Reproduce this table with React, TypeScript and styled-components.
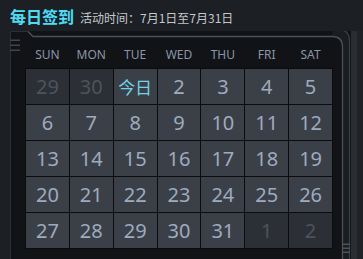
import React from "react";
import styled, { createGlobalStyle } from "styled-components";

const Global = createGlobalStyle`
  html, body { margin: 0; padding: 0; background: #1c1f23; }
  body { font-family: "Noto Sans", "Noto Sans CJK SC", sans-serif; }
`;

const Stage = styled.div`
  position: relative;
  width: 363px;
  height: 259px;
  overflow: hidden;
  background: #1c1f23;
  display: flex;
  flex-direction: column;
`;

const Header = styled.div`
  height: 31px;
  box-sizing: border-box;
  padding: 6px 0 0 10px;
  display: flex;
  align-items: baseline;
  gap: 6px;
`;

const Title = styled.span`
  font-family: "Noto Sans CJK SC", sans-serif;
  font-size: 16px;
  font-weight: 700;
  line-height: 20px;
  color: #55d9f0;
  text-shadow: 0 0 1px #0b3d48, 0 0 1px #0b3d48;
`;

const Sub = styled.span`
  font-family: "Noto Sans CJK SC", sans-serif;
  font-size: 12px;
  line-height: 16px;
  color: #c4c8cc;
`;

const Panel = styled.div`
  position: relative;
  margin-left: 10px;
  width: 341px;
  flex: 1;
  box-sizing: border-box;
  padding: 17px 0 0 15px;
  background: #111316;
`;

const Frame = styled.svg`
  position: absolute;
  left: 0;
  top: 0;
  pointer-events: none;
  z-index: 1;
`;

const Content = styled.div`
  position: relative;
  z-index: 2;
`;

const WeekRow = styled.div`
  width: 308px;
  box-sizing: border-box;
  padding: 0 1px;
  display: grid;
  grid-template-columns: repeat(7, 1fr);
  column-gap: 1px;
  height: 14px;
`;

const WeekDay = styled.div`
  text-align: center;
  font-size: 12px;
  line-height: 14px;
  color: #8a96a8;
`;

const Grid = styled.div`
  margin-top: 6px;
  width: 308px;
  box-sizing: border-box;
  padding: 1px;
  display: grid;
  grid-template-columns: repeat(7, 1fr);
  grid-auto-rows: 35px;
  gap: 1px;
  background: #0b0c0e;
`;

const Cell = styled.div<{ $muted?: boolean }>`
  display: flex;
  align-items: center;
  justify-content: center;
  background: ${(p) => (p.$muted ? "#2c3036" : "#3b4048")};
  color: ${(p) => (p.$muted ? "#4d535c" : "#9eaabe")};
  font-size: 20px;
  line-height: 1;
`;

const Today = styled.span`
  font-family: "Noto Sans CJK SC", sans-serif;
  font-size: 17px;
  color: #72d2e6;
`;

const weekdays = ["SUN", "MON", "TUE", "WED", "THU", "FRI", "SAT"];

type Day = { n: number; muted?: boolean; today?: boolean };

const days: Day[] = [
  { n: 29, muted: true },
  { n: 30, muted: true },
  { n: 1, today: true },
  ...Array.from({ length: 30 }, (_, i) => ({ n: i + 2 })),
  { n: 1, muted: true },
  { n: 2, muted: true },
];

export default function App() {
  return (
    <>
      <Global />
      <Stage>
        <Header>
          <Title>每日签到</Title>
          <Sub>活动时间：7月1日至7月31日</Sub>
        </Header>
        <Panel>
          <Frame width="353" height="228" viewBox="10 31 353 228">
            <rect x="351" y="29" width="6" height="230" fill="#2a2e33" />
            <rect x="357" y="29" width="6" height="230" fill="#1f2226" />
            <path d="M333 29 H338 Q350 29 350 41 V259 H342 V46 Q342 36 332 36 Z" fill="#1a1d21" />
            <path d="M10.5 259 V31.5 H28" stroke="#2c3036" strokeWidth="1" fill="none" />
            <path d="M28 31.5 L33 36.5 H332 Q342.5 36.5 342.5 47 V259" stroke="#4b5159" strokeWidth="1.3" fill="none" />
            <path d="M300 29.5 H338 Q349.5 29.5 349.5 41 V259" stroke="#3a3f46" strokeWidth="1.2" fill="none" />
            <rect x="10" y="39.5" width="10" height="1.5" fill="#40464d" />
            <rect x="10" y="44.5" width="10" height="1.5" fill="#40464d" />
            <rect x="10" y="49.5" width="10" height="1.5" fill="#40464d" />
            <rect x="343" y="243.5" width="7" height="1.5" fill="#4d535b" />
            <rect x="343" y="247.5" width="7" height="1.5" fill="#4d535b" />
            <rect x="343" y="251.5" width="7" height="1.5" fill="#4d535b" />
          </Frame>
          <Content>
            <WeekRow>
              {weekdays.map((d) => (
                <WeekDay key={d}>{d}</WeekDay>
              ))}
            </WeekRow>
            <Grid>
              {days.map((d, i) => (
                <Cell key={i} $muted={d.muted}>
                  {d.today ? <Today>今日</Today> : d.n}
                </Cell>
              ))}
            </Grid>
          </Content>
        </Panel>
      </Stage>
    </>
  );
}
